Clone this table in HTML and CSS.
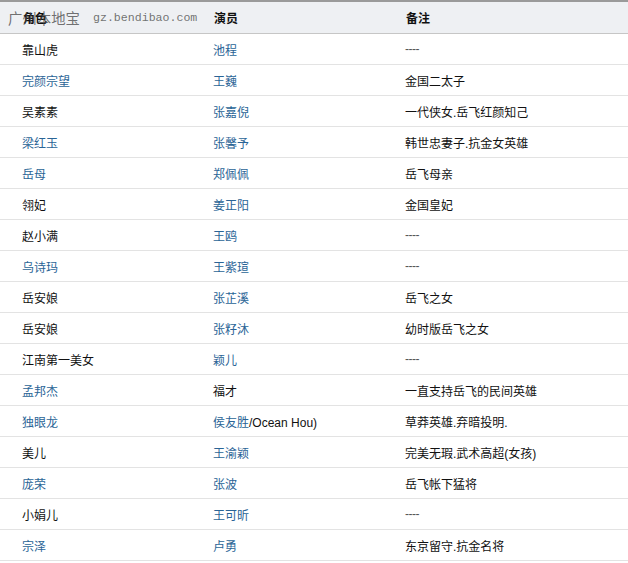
FILE: index.html
```html
<!DOCTYPE html>
<html lang="zh">
<head>
<meta charset="utf-8">
<link rel="stylesheet" href="styles.css">
</head>
<body>
<div class="wrap">
<table class="cast">
<thead>
<tr><th class="c1">角色</th><th class="c2">演员</th><th class="c3">备注</th></tr>
</thead>
<tbody>
<tr><td class="c1">靠山虎</td><td class="c2"><a>池程</a></td><td class="c3 dash">----</td></tr>
<tr><td class="c1"><a>完颜宗望</a></td><td class="c2"><a>王巍</a></td><td class="c3">金国二太子</td></tr>
<tr><td class="c1">吴素素</td><td class="c2"><a>张嘉倪</a></td><td class="c3">一代侠女.岳飞红颜知己</td></tr>
<tr><td class="c1"><a>梁红玉</a></td><td class="c2"><a>张馨予</a></td><td class="c3">韩世忠妻子.抗金女英雄</td></tr>
<tr><td class="c1"><a>岳母</a></td><td class="c2"><a>郑佩佩</a></td><td class="c3">岳飞母亲</td></tr>
<tr><td class="c1">翎妃</td><td class="c2"><a>姜正阳</a></td><td class="c3">金国皇妃</td></tr>
<tr><td class="c1">赵小满</td><td class="c2"><a>王鸥</a></td><td class="c3 dash">----</td></tr>
<tr><td class="c1"><a>乌诗玛</a></td><td class="c2"><a>王紫瑄</a></td><td class="c3 dash">----</td></tr>
<tr><td class="c1">岳安娘</td><td class="c2"><a>张芷溪</a></td><td class="c3">岳飞之女</td></tr>
<tr><td class="c1">岳安娘</td><td class="c2"><a>张籽沐</a></td><td class="c3">幼时版岳飞之女</td></tr>
<tr><td class="c1">江南第一美女</td><td class="c2"><a>颖儿</a></td><td class="c3 dash">----</td></tr>
<tr><td class="c1"><a>孟邦杰</a></td><td class="c2">福才</td><td class="c3">一直支持岳飞的民间英雄</td></tr>
<tr><td class="c1"><a>独眼龙</a></td><td class="c2"><a>侯友胜</a>/Ocean Hou)</td><td class="c3">草莽英雄.弃暗投明.</td></tr>
<tr><td class="c1">美儿</td><td class="c2"><a>王渝颖</a></td><td class="c3">完美无瑕.武术高超(女孩)</td></tr>
<tr><td class="c1"><a>庞荣</a></td><td class="c2"><a>张波</a></td><td class="c3">岳飞帐下猛将</td></tr>
<tr><td class="c1">小娟儿</td><td class="c2"><a>王可昕</a></td><td class="c3 dash">----</td></tr>
<tr><td class="c1"><a>宗泽</a></td><td class="c2"><a>卢勇</a></td><td class="c3">东京留守.抗金名将</td></tr>
</tbody>
</table>
<div class="watermark"><span class="wm-cn">广州本地宝</span><span class="wm-url">gz.bendibao.com</span></div>
</div>
</body>
</html>
```

FILE: styles.css
```css
html, body {
  margin: 0;
  padding: 0;
  background: #ffffff;
}
body {
  font-family: "Liberation Sans", "Noto Sans CJK SC", sans-serif;
  font-size: 12px;
  color: #111;
}
.wrap {
  position: relative;
  width: 628px;
}
.cast {
  width: 628px;
  border-collapse: collapse;
  table-layout: fixed;
}
.cast th {
  height: 31px;
  padding: 0;
  background: #eef0f3;
  border-top: 2px solid #9a9a9a;
  border-bottom: 1px solid #c6c6c6;
  text-align: left;
  font-weight: bold;
  color: #111;
}
.cast td {
  height: 30px;
  padding: 0;
  border-bottom: 1px solid #e3e3e3;
  white-space: nowrap;
}
.c1 { width: 176px; padding-left: 22px !important; }
.c2 { width: 177px; padding-left: 14px !important; }
.c3 { padding-left: 14px !important; }
.cast th.c1 { padding-left: 23px !important; }
.cast th.c2 { padding-left: 15px !important; }
.cast th.c3 { padding-left: 15px !important; }
.cast a {
  color: #2a6496;
  text-decoration: none;
}
.dash {
  letter-spacing: -0.5px;
  color: #555;
}
.watermark {
  position: absolute;
  left: 8px;
  top: 2px;
  height: 31px;
  display: flex;
  align-items: center;
  pointer-events: none;
}
.wm-cn {
  font-family: "Noto Sans CJK SC", sans-serif;
  font-size: 14.4px;
  color: rgba(70, 70, 70, 0.75);
}
.wm-url {
  margin-left: 13px;
  font-family: "Liberation Mono", monospace;
  font-size: 11.6px;
  color: rgba(80, 80, 80, 0.8);
}
```
